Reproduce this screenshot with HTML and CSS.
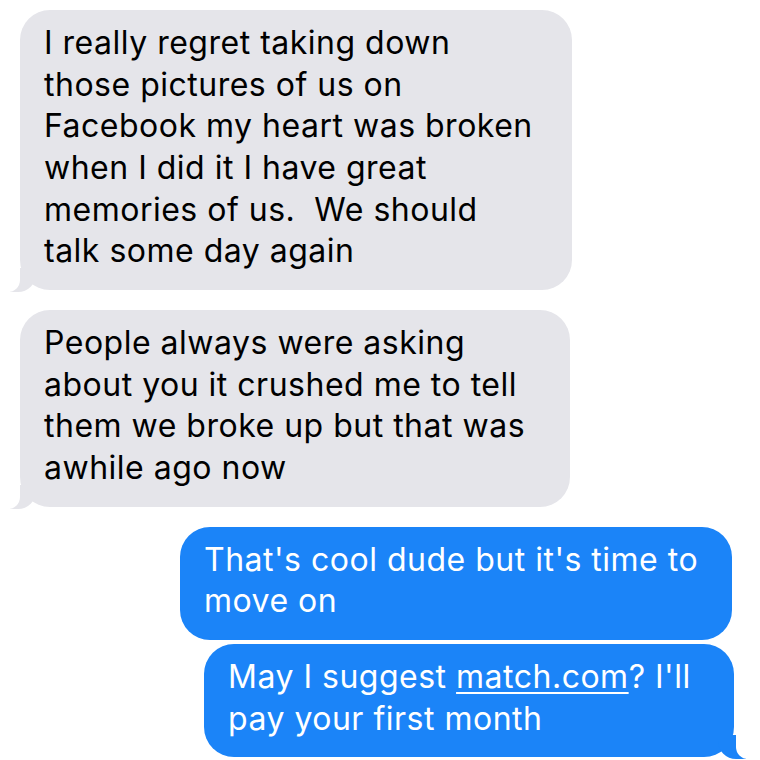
FILE: index.html
```html
<!DOCTYPE html>
<html lang="en">
<head>
    <meta charset="UTF-8">
    <meta name="viewport" content="width=device-width, initial-scale=1.0">
    <title>Messages</title>
    <link rel="stylesheet" href="styles.css">
</head>
<body>
    <div class="thread">
        <div class="bubble them w-first">
            I really regret taking down<br>
            those pictures of us on<br>
            Facebook my heart was broken<br>
            when I did it I have great<br>
            memories of us.&nbsp; We should<br>
            talk some day again
        </div>

        <div class="bubble them w-second">
            People always were asking<br>
            about you it crushed me to tell<br>
            them we broke up but that was<br>
            awhile ago now
        </div>

        <div class="bubble me w-third">
            That's cool dude but it's time to<br>
            move on
        </div>

        <div class="bubble me last w-fourth">
            May I suggest <a href="#">match.com</a>? I'll<br>
            pay your first month
        </div>
    </div>
</body>
</html>
```

FILE: styles.css
```css
body {
    margin: 0;
    padding: 0;
    background-color: #fff;
    font-family: Inter, "Liberation Sans", Arial, sans-serif;
    overflow: hidden;
}

.thread {
    display: flex;
    flex-direction: column;
    padding: 10px 0 0;
}

.bubble {
    position: relative;
    box-sizing: border-box;
    padding: 12px 24px 18px;
    border-radius: 30px;
    font-size: 32px;
    line-height: 41.67px;
    letter-spacing: 0.5px;
    white-space: nowrap;
}

/* grey bubbles on the left */
.them {
    align-self: flex-start;
    margin-left: 20px;
    margin-bottom: 20px;
    background-color: #e5e5ea;
    color: #000;
}

.them::before {
    content: "";
    position: absolute;
    bottom: -2px;
    left: -10px;
    width: 26px;
    height: 24px;
    background-color: #e5e5ea;
    border-bottom-right-radius: 18px;
}

.them::after {
    content: "";
    position: absolute;
    bottom: -2px;
    left: -22px;
    width: 22px;
    height: 26px;
    background-color: #fff;
    border-bottom-right-radius: 12px;
}

/* blue bubbles on the right */
.me {
    align-self: flex-end;
    margin-right: 28px;
    margin-bottom: 4px;
    background-color: #1b84f8;
    color: #fff;
}

.me a {
    color: #fff;
    text-decoration: underline;
    text-decoration-thickness: 2px;
    text-underline-offset: 4px;
}

.me.last::before {
    content: "";
    position: absolute;
    bottom: -2px;
    right: -12px;
    width: 28px;
    height: 24px;
    background-color: #1b84f8;
    border-bottom-left-radius: 18px;
}

.me.last::after {
    content: "";
    position: absolute;
    bottom: -2px;
    right: -24px;
    width: 22px;
    height: 26px;
    background-color: #fff;
    border-bottom-left-radius: 12px;
}

.w-first {
    width: 552px;
}

.w-second {
    width: 550px;
}

.w-third {
    width: 552px;
}

.w-fourth {
    width: 530px;
    margin-right: 26px;
}
```
